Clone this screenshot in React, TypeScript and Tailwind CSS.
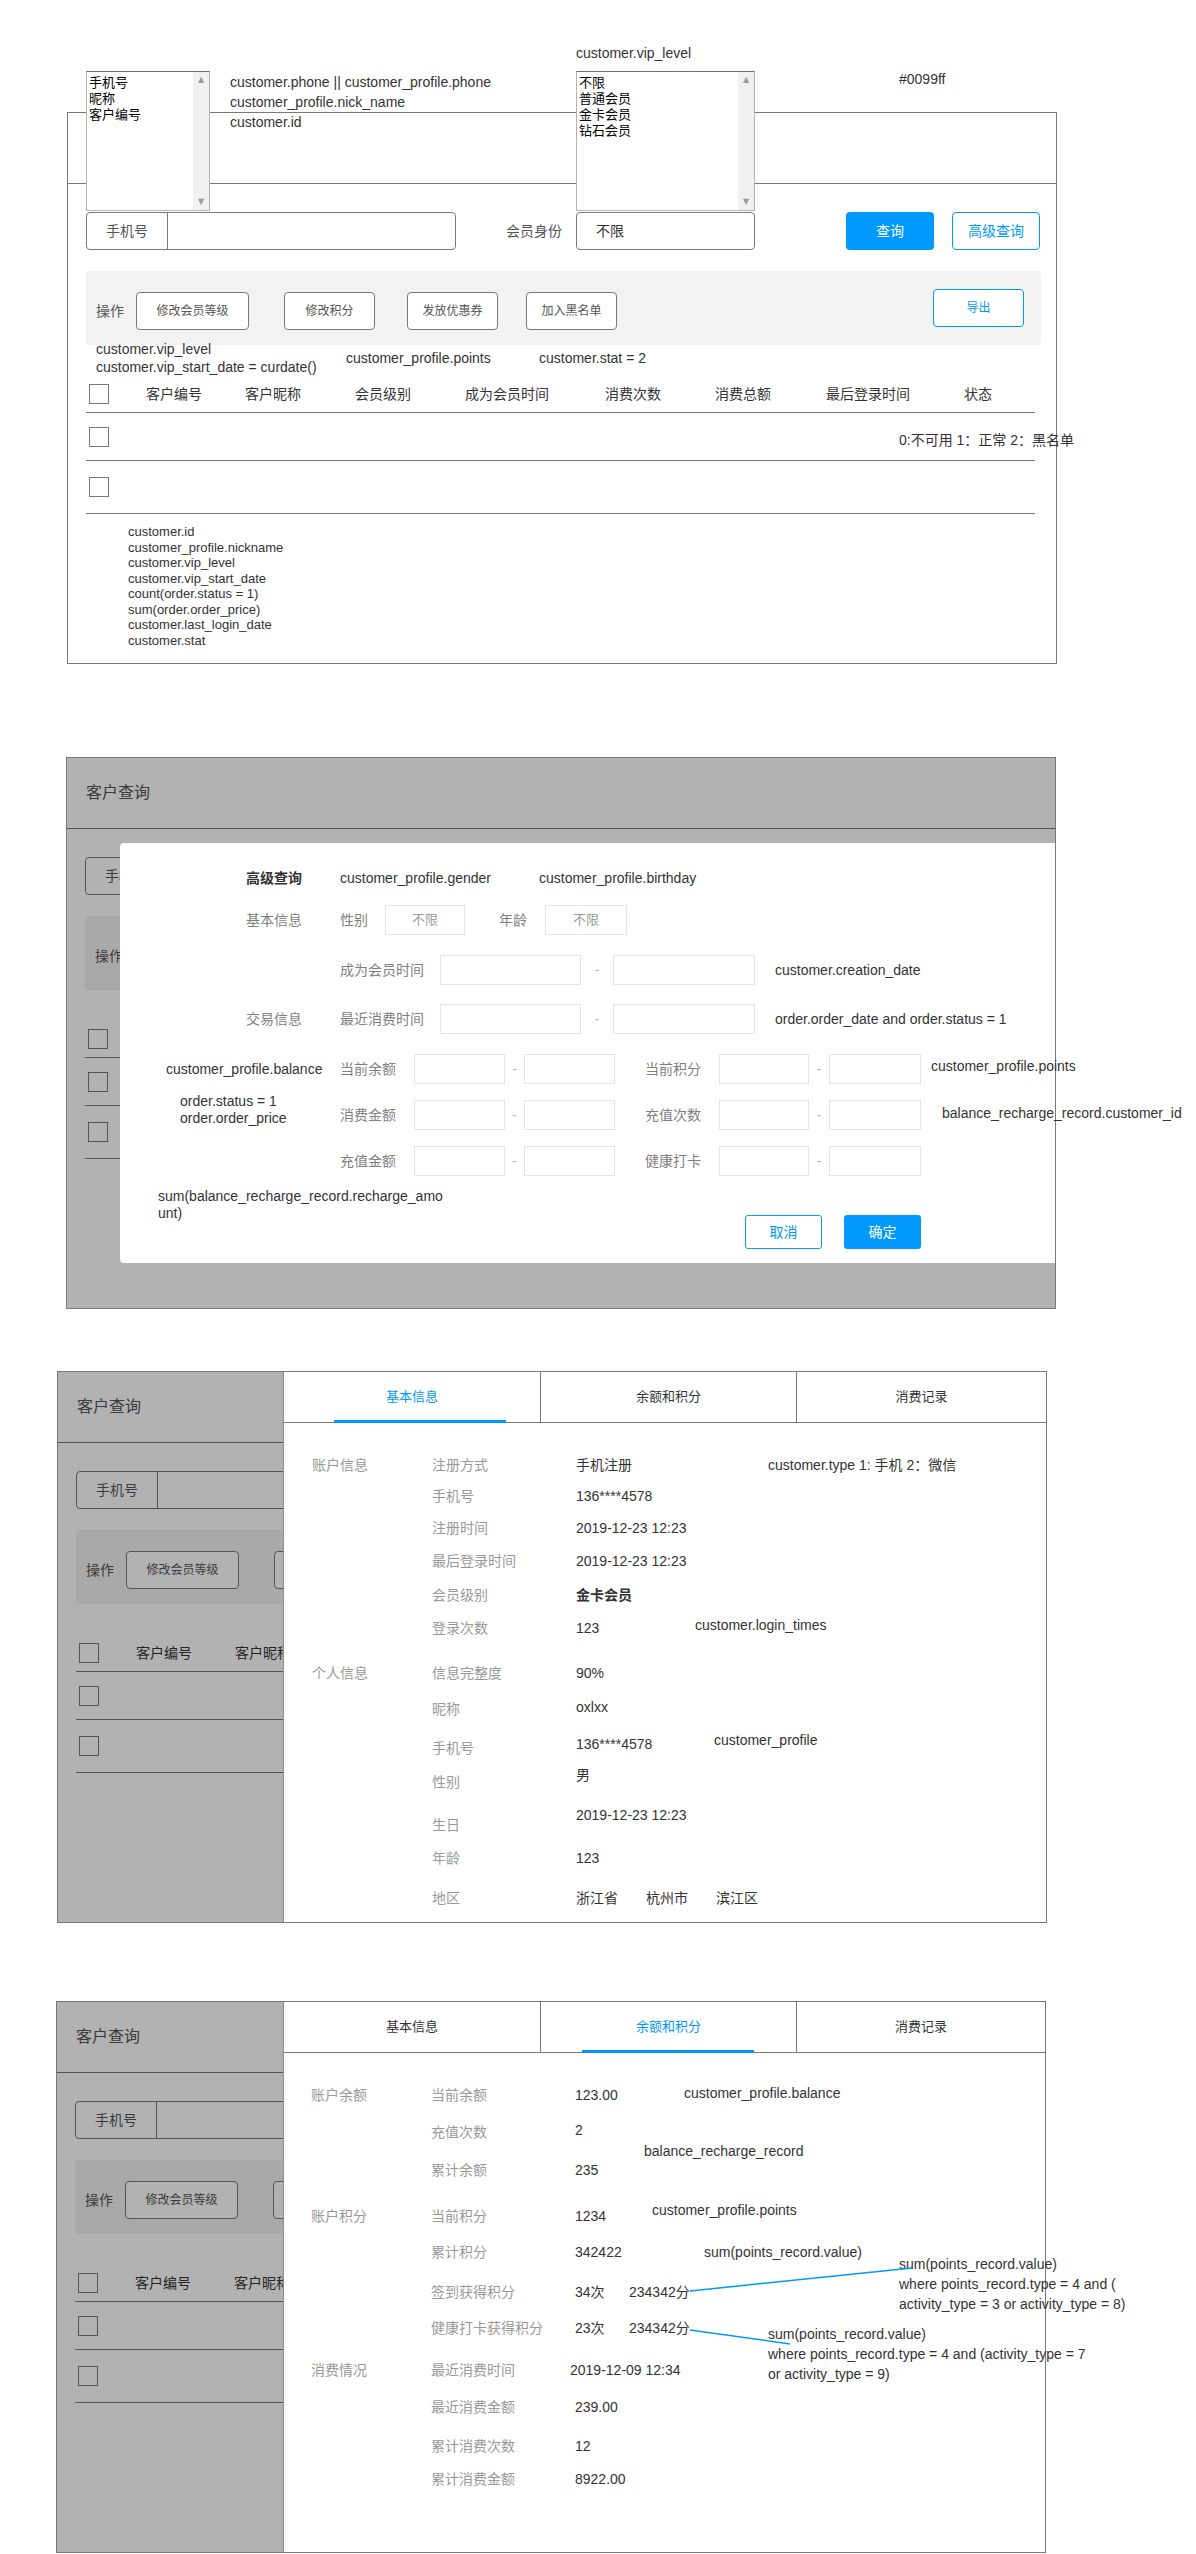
import type { ReactNode } from "react";

// x = where each text starts, measured from the page's inner left edge,
// so a covered page can skip the texts that lie under its overlay.
const TABLE_COLUMNS = [
  { label: "客户编号", width: "w-[99px]", x: 78 },
  { label: "客户昵称", width: "w-[110px]", x: 177 },
  { label: "会员级别", width: "w-[110px]", x: 287 },
  { label: "成为会员时间", width: "w-[140px]", x: 397 },
  { label: "消费次数", width: "w-[110px]", x: 537 },
  { label: "消费总额", width: "w-[111px]", x: 647 },
  { label: "最后登录时间", width: "w-[138px]", x: 758 },
  { label: "状态", width: "", x: 896 }
];

const ACTIONS = [
  { label: "修改会员等级", className: "w-[113px] ml-[12px]", x: 68 },
  { label: "修改积分", className: "w-[91px] ml-[35px]", x: 216 },
  { label: "发放优惠券", className: "w-[91px] ml-[32px]", x: 339 },
  { label: "加入黑名单", className: "w-[91px] ml-[28px]", x: 458 }
];

const FIELD_LIST = [
  "customer.id",
  "customer_profile.nickname",
  "customer.vip_level",
  "customer.vip_start_date",
  "count(order.status = 1)",
  "sum(order.order_price)",
  "customer.last_login_date",
  "customer.stat"
];

const TABS = ["基本信息", "余额和积分", "消费记录"];

export default function App() {
  return (
    <div className="h-[2554px] w-[1196px] overflow-hidden bg-white font-['Liberation_Sans','Noto_Sans_CJK_SC',sans-serif] text-[#333]">
      <ListSection />
      <AdvancedSearchSection />
      <BasicInfoSection />
      <BalanceSection />
    </div>
  );
}

/* ---------- shared page behind the overlays ---------- */

function QueryPage({
  dim,
  hideTitle,
  clip,
  reach = 10000,
  footer,
  children
}: {
  dim?: boolean;
  hideTitle?: boolean;
  clip?: string;
  reach?: number;
  footer?: ReactNode;
  children?: ReactNode;
}) {
  const show = (x: number) => x < reach;

  return (
    <div className="relative h-[552px] w-[990px] border border-[#797979] bg-white">
      <div className="flex h-[71px] items-center border-b border-[#797979] pl-[19px] text-[16px] text-[#555]">
        {!hideTitle && "客户查询"}
      </div>
      <div className={`overflow-hidden ${clip ?? "w-full"}`}>
        <div className="w-[988px] pl-[18px] pr-[15px]">
          <div className="mt-[28px] flex h-[38px] items-center text-[14px]">
            <div className="flex h-[38px] w-[370px] shrink-0 rounded-[4px] border border-[#797979]">
              <span className="flex w-[81px] items-center justify-center border-r border-[#797979] text-[#555]">
                手机号
              </span>
            </div>
            {show(438) && (
              <>
                <span className="ml-[50px] w-[70px] shrink-0 text-[#555]">会员身份</span>
                <div className="flex h-[38px] w-[179px] shrink-0 items-center rounded-[4px] border border-[#797979] pl-[19px]">
                  不限
                </div>
                <span className="ml-[91px] flex h-[38px] w-[88px] shrink-0 items-center justify-center rounded-[4px] bg-[#0099ff] text-white">
                  查询
                </span>
                <span className="ml-[18px] flex h-[38px] w-[88px] shrink-0 items-center justify-center rounded-[4px] border border-[#0099ff] text-[#0099ff]">
                  高级查询
                </span>
              </>
            )}
          </div>

          <div className="mt-[21px] flex h-[74px] items-start rounded-[4px] bg-[#f2f2f2] pl-[10px] pr-[17px] pt-[21px]">
            <span className="flex h-[38px] items-center text-[14px] text-[#555]">操作</span>
            {ACTIONS.filter((action) => show(action.x)).map((action) => (
              <span
                key={action.label}
                className={`flex h-[38px] shrink-0 items-center justify-center rounded-[4px] border border-[#797979] bg-white text-[12px] text-[#555] ${action.className}`}
              >
                {show(action.x + 12) && action.label}
              </span>
            ))}
            {show(864) && (
              <span className="-mt-[3px] ml-auto flex h-[38px] w-[91px] items-center justify-center rounded-[4px] border border-[#0099ff] bg-white text-[12px] text-[#0099ff]">
                导出
              </span>
            )}
          </div>

          <div className="mt-[31px] w-[949px] text-[14px]">
            <div className="flex h-[37px] items-center border-b border-[#797979]">
              <Checkbox />
              <span className="w-[37px] shrink-0" />
              {TABLE_COLUMNS.filter((col) => show(col.x)).map((col) => (
                <span key={col.label} className={`shrink-0 whitespace-nowrap ${col.width}`}>
                  {col.label}
                </span>
              ))}
            </div>
            <div className="flex h-[48px] items-center border-b border-[#797979]">
              <Checkbox />
            </div>
            <div className="flex h-[53px] items-center border-b border-[#797979]">
              <Checkbox />
            </div>
          </div>
          {footer}
        </div>
      </div>
      {dim && <div className="absolute inset-0 bg-black/30" />}
      {children}
    </div>
  );
}

function Checkbox() {
  return <span className="ml-[3px] h-[20px] w-[20px] shrink-0 border border-[#797979] bg-white" />;
}

function Note({ className, children }: { className: string; children: ReactNode }) {
  return (
    <span className={`absolute whitespace-nowrap text-[14px] leading-[16px] text-[#333] ${className}`}>
      {children}
    </span>
  );
}

function ListBox({ items, className }: { items: string[]; className: string }) {
  return (
    <div className={`absolute flex border border-[#b5b5b5] border-t-[#6f6f6f] bg-white ${className}`}>
      <div className="flex-1 pl-[2px] pt-[3px] text-[13px] leading-[16px] text-black">
        {items.map((item) => (
          <div key={item}>{item}</div>
        ))}
      </div>
      <div className="flex w-[16px] flex-col items-center justify-between bg-[#f1f1f1] py-[3px] font-['DejaVu_Sans'] text-[8px] leading-[10px] text-[#9a9a9a]">
        <span>▲</span>
        <span>▼</span>
      </div>
    </div>
  );
}

/* ---------- 1: customer list ---------- */

function ListSection() {
  return (
    <section className="relative pl-[67px] pt-[112px]">
      <QueryPage
        hideTitle
        footer={
          <div className="pl-[42px] pt-[10px] text-[13px] leading-[15.5px] text-[#333]">
            {FIELD_LIST.map((field) => (
              <div key={field}>{field}</div>
            ))}
          </div>
        }
      />
      <Note className="left-[576px] top-[45px]">customer.vip_level</Note>
      <div className="absolute left-[230px] top-[72px] whitespace-nowrap text-[14px] leading-[20px] text-[#333]">
        <div>customer.phone || customer_profile.phone</div>
        <div>customer_profile.nick_name</div>
        <div>customer.id</div>
      </div>
      <Note className="left-[899px] top-[71px]">#0099ff</Note>
      <ListBox className="left-[86px] top-[71px] h-[140px] w-[124px]" items={["手机号", "昵称", "客户编号"]} />
      <ListBox
        className="left-[576px] top-[71px] h-[140px] w-[179px]"
        items={["不限", "普通会员", "金卡会员", "钻石会员"]}
      />
      <div className="absolute left-[96px] top-[340px] whitespace-nowrap text-[14px] leading-[18px] text-[#333]">
        <div>customer.vip_level</div>
        <div>customer.vip_start_date = curdate()</div>
      </div>
      <Note className="left-[346px] top-[350px]">customer_profile.points</Note>
      <Note className="left-[539px] top-[350px]">customer.stat = 2</Note>
      <Note className="left-[899px] top-[432px]">0:不可用 1：正常 2：黑名单</Note>
    </section>
  );
}

/* ---------- 2: advanced search modal ---------- */

function Field({ className }: { className: string }) {
  return <span className={`h-[30px] shrink-0 border border-[#e4e4e4] bg-white ${className}`} />;
}

function Dash({ className }: { className: string }) {
  return <span className={`shrink-0 text-center text-[12px] text-[#aaa] ${className}`}>-</span>;
}

function RangeRow({
  left,
  right,
  note,
  noteClass,
  className
}: {
  left: string;
  right: string;
  note?: string;
  noteClass?: string;
  className: string;
}) {
  return (
    <div className={`flex h-[30px] items-center pl-[94px] ${className}`}>
      <span className="w-[74px] shrink-0">{left}</span>
      <Field className="w-[91px]" />
      <Dash className="w-[19px]" />
      <Field className="w-[91px]" />
      <span className="ml-[30px] w-[74px] shrink-0">{right}</span>
      <Field className="w-[90px]" />
      <Dash className="w-[20px]" />
      <Field className="w-[92px]" />
      {note && (
        <span className={`whitespace-nowrap text-[14px] text-[#333] ${noteClass}`}>{note}</span>
      )}
    </div>
  );
}

function AdvancedSearchSection() {
  return (
    <section className="pl-[66px] pt-[93px]">
      <QueryPage dim clip="w-[53px]" reach={53}>
        <div className="absolute left-[53px] right-0 top-[85px] h-[420px] rounded-l-[4px] bg-white pl-[126px] pt-[26px] text-[14px] leading-[20px] text-[#7f7f7f]">
          <div className="flex h-[18px] items-center whitespace-nowrap">
            <span className="w-[94px] font-bold text-[#333]">高级查询</span>
            <span className="w-[199px] text-[#333]">customer_profile.gender</span>
            <span className="text-[#333]">customer_profile.birthday</span>
          </div>
          <div className="mt-[18px] flex h-[30px] items-center">
            <span className="w-[94px]">基本信息</span>
            <span className="w-[45px]">性别</span>
            <span className="flex h-[30px] w-[80px] items-center justify-center border border-[#e4e4e4] text-[13px] text-[#999]">
              不限
            </span>
            <span className="ml-[34px] w-[46px]">年龄</span>
            <span className="flex h-[30px] w-[82px] items-center justify-center border border-[#e4e4e4] text-[13px] text-[#999]">
              不限
            </span>
          </div>
          <div className="mt-[20px] flex h-[30px] items-center pl-[94px]">
            <span className="w-[100px] shrink-0">成为会员时间</span>
            <Field className="w-[141px]" />
            <Dash className="w-[32px]" />
            <Field className="w-[142px]" />
            <span className="ml-[20px] whitespace-nowrap text-[#333]">customer.creation_date</span>
          </div>
          <div className="mt-[19px] flex h-[30px] items-center">
            <span className="w-[94px] shrink-0">交易信息</span>
            <span className="w-[100px] shrink-0">最近消费时间</span>
            <Field className="w-[141px]" />
            <Dash className="w-[32px]" />
            <Field className="w-[142px]" />
            <span className="ml-[20px] whitespace-nowrap text-[#333]">
              order.order_date and order.status = 1
            </span>
          </div>
          <RangeRow
            className="mt-[20px]"
            left="当前余额"
            right="当前积分"
            note="customer_profile.points"
            noteClass="ml-[10px] mb-[6px]"
          />
          <RangeRow
            className="mt-[16px]"
            left="消费金额"
            right="充值次数"
            note="balance_recharge_record.customer_id"
            noteClass="ml-[21px] mb-[4px]"
          />
          <RangeRow className="mt-[16px]" left="充值金额" right="健康打卡" />
          <div className="mt-[39px] flex gap-[22px] pl-[499px]">
            <span className="flex h-[34px] w-[77px] items-center justify-center rounded-[3px] border border-[#0099ff] text-[#0099ff]">
              取消
            </span>
            <span className="flex h-[34px] w-[77px] items-center justify-center rounded-[3px] bg-[#0099ff] text-white">
              确定
            </span>
          </div>

          <Note className="left-[46px] top-[218px]">customer_profile.balance</Note>
          <div className="absolute left-[60px] top-[250px] whitespace-nowrap text-[14px] leading-[17px] text-[#333]">
            <div>order.status = 1</div>
            <div>order.order_price</div>
          </div>
          <div className="absolute left-[38px] top-[345px] whitespace-nowrap text-[14px] leading-[17px] text-[#333]">
            <div>sum(balance_recharge_record.recharge_amo</div>
            <div>unt)</div>
          </div>
        </div>
      </QueryPage>
    </section>
  );
}

/* ---------- 3 & 4: detail drawer ---------- */

function DetailPanel({
  active,
  underline,
  className,
  children
}: {
  active: number;
  underline: string;
  className: string;
  children: ReactNode;
}) {
  return (
    <div className={`absolute bottom-0 right-0 top-0 border-l border-[#8c8c8c] bg-white ${className}`}>
      <div className="flex h-[51px] border-b border-[#797979] text-[13px]">
        {TABS.map((tab, i) => (
          <div
            key={tab}
            className={
              i === 0
                ? "relative flex w-[257px] items-center justify-center border-r border-[#797979]"
                : i === 1
                  ? "relative flex w-[256px] items-center justify-center border-r border-[#797979]"
                  : "relative flex flex-1 items-center justify-center"
            }
          >
            <span className={i === active ? "text-[#0099ff]" : "text-[#333]"}>{tab}</span>
            {i === active && (
              <span className={`absolute -bottom-px h-[3px] w-[172px] bg-[#0099ff] ${underline}`} />
            )}
          </div>
        ))}
      </div>
      {children}
    </div>
  );
}

function InfoRow({
  section,
  label,
  className,
  children
}: {
  section?: string;
  label: string;
  className?: string;
  children: ReactNode;
}) {
  return (
    <div className={`flex h-[20px] items-center whitespace-nowrap text-[14px] leading-[20px] ${className ?? ""}`}>
      <span className="w-[120px] shrink-0 text-[#999]">{section}</span>
      <span className="w-[144px] shrink-0 text-[#999]">{label}</span>
      {children}
    </div>
  );
}

function Val({ className, children }: { className?: string; children: ReactNode }) {
  return <span className={`shrink-0 text-[#333] ${className ?? ""}`}>{children}</span>;
}

function Remark({ className, children }: { className?: string; children: ReactNode }) {
  return <span className={`text-[14px] text-[#333] ${className ?? ""}`}>{children}</span>;
}

function BasicInfoSection() {
  return (
    <section className="pl-[57px] pt-[62px]">
      <QueryPage dim clip="w-[225px]" reach={225}>
        <DetailPanel active={0} underline="left-[50px]" className="left-[225px]">
          <div className="pl-[28px] pt-[32px]">
            <InfoRow section="账户信息" label="注册方式">
              <Val className="w-[192px]">手机注册</Val>
              <Remark>customer.type 1: 手机 2：微信</Remark>
            </InfoRow>
            <InfoRow label="手机号" className="mt-[11px]">
              <Val>136****4578</Val>
            </InfoRow>
            <InfoRow label="注册时间" className="mt-[12px]">
              <Val>2019-12-23 12:23</Val>
            </InfoRow>
            <InfoRow label="最后登录时间" className="mt-[13px]">
              <Val>2019-12-23 12:23</Val>
            </InfoRow>
            <InfoRow label="会员级别" className="mt-[14px]">
              <Val className="font-bold">金卡会员</Val>
            </InfoRow>
            <InfoRow label="登录次数" className="mt-[13px]">
              <Val className="w-[119px]">123</Val>
              <Remark className="mb-[6px]">customer.login_times</Remark>
            </InfoRow>
            <InfoRow section="个人信息" label="信息完整度" className="mt-[25px]">
              <Val>90%</Val>
            </InfoRow>
            <InfoRow label="昵称" className="mt-[16px]">
              <Val className="mb-[4px]">oxlxx</Val>
            </InfoRow>
            <InfoRow label="手机号" className="mt-[19px]">
              <Val className="mb-[8px] w-[138px]">136****4578</Val>
              <Remark className="mb-[16px]">customer_profile</Remark>
            </InfoRow>
            <InfoRow label="性别" className="mt-[14px]">
              <Val className="mb-[14px]">男</Val>
            </InfoRow>
            <InfoRow label="生日" className="mt-[23px]">
              <Val className="mb-[20px]">2019-12-23 12:23</Val>
            </InfoRow>
            <InfoRow label="年龄" className="mt-[13px]">
              <Val>123</Val>
            </InfoRow>
            <InfoRow label="地区" className="mt-[20px]">
              <span className="flex gap-[28px] text-[#333]">
                <span>浙江省</span>
                <span>杭州市</span>
                <span>滨江区</span>
              </span>
            </InfoRow>
          </div>
        </DetailPanel>
      </QueryPage>
    </section>
  );
}

function BalanceSection() {
  return (
    <section className="pl-[56px] pt-[78px]">
      <QueryPage dim clip="w-[226px]" reach={226}>
        <DetailPanel active={1} underline="left-[41px]" className="left-[226px]">
          <div className="pl-[27px] pt-[32px]">
            <InfoRow section="账户余额" label="当前余额">
              <Val className="w-[109px]">123.00</Val>
              <Remark className="mb-[4px]">customer_profile.balance</Remark>
            </InfoRow>
            <InfoRow label="充值次数" className="mt-[17px]">
              <Val className="mb-[4px]">2</Val>
            </InfoRow>
            <InfoRow label="累计余额" className="mt-[18px]">
              <Val>235</Val>
            </InfoRow>
            <InfoRow section="账户积分" label="当前积分" className="mt-[26px]">
              <Val className="w-[77px]">1234</Val>
              <Remark className="mb-[12px]">customer_profile.points</Remark>
            </InfoRow>
            <InfoRow label="累计积分" className="mt-[16px]">
              <Val className="w-[129px]">342422</Val>
              <Remark>sum(points_record.value)</Remark>
            </InfoRow>
            <InfoRow label="签到获得积分" className="mt-[20px]">
              <Val className="w-[54px]">34次</Val>
              <Val>234342分</Val>
            </InfoRow>
            <InfoRow label="健康打卡获得积分" className="mt-[16px]">
              <Val className="w-[54px]">23次</Val>
              <Val>234342分</Val>
            </InfoRow>
            <InfoRow section="消费情况" label="最近消费时间" className="mt-[22px]">
              <Val className="-ml-[5px]">2019-12-09 12:34</Val>
            </InfoRow>
            <InfoRow label="最近消费金额" className="mt-[17px]">
              <Val>239.00</Val>
            </InfoRow>
            <InfoRow label="累计消费次数" className="mt-[19px]">
              <Val>12</Val>
            </InfoRow>
            <InfoRow label="累计消费金额" className="mt-[13px]">
              <Val>8922.00</Val>
            </InfoRow>
          </div>

          <Note className="left-[360px] top-[141px]">balance_recharge_record</Note>
          <div className="absolute left-[615px] top-[252px] whitespace-nowrap text-[14px] leading-[20px] text-[#333]">
            <div>sum(points_record.value)</div>
            <div>where points_record.type = 4 and (</div>
            <div>activity_type = 3 or activity_type = 8)</div>
          </div>
          <div className="absolute left-[484px] top-[322px] whitespace-nowrap text-[14px] leading-[20px] text-[#333]">
            <div>sum(points_record.value)</div>
            <div>where points_record.type = 4 and (activity_type = 7</div>
            <div>or activity_type = 9)</div>
          </div>
          <svg
            className="pointer-events-none absolute left-0 top-0 h-[552px] w-[900px] overflow-visible"
            aria-hidden="true"
          >
            <line x1="406" y1="289" x2="628" y2="266" stroke="#0099ff" strokeWidth="1.5" />
            <line x1="406" y1="328" x2="506" y2="342" stroke="#0099ff" strokeWidth="1.5" />
          </svg>
        </DetailPanel>
      </QueryPage>
    </section>
  );
}
